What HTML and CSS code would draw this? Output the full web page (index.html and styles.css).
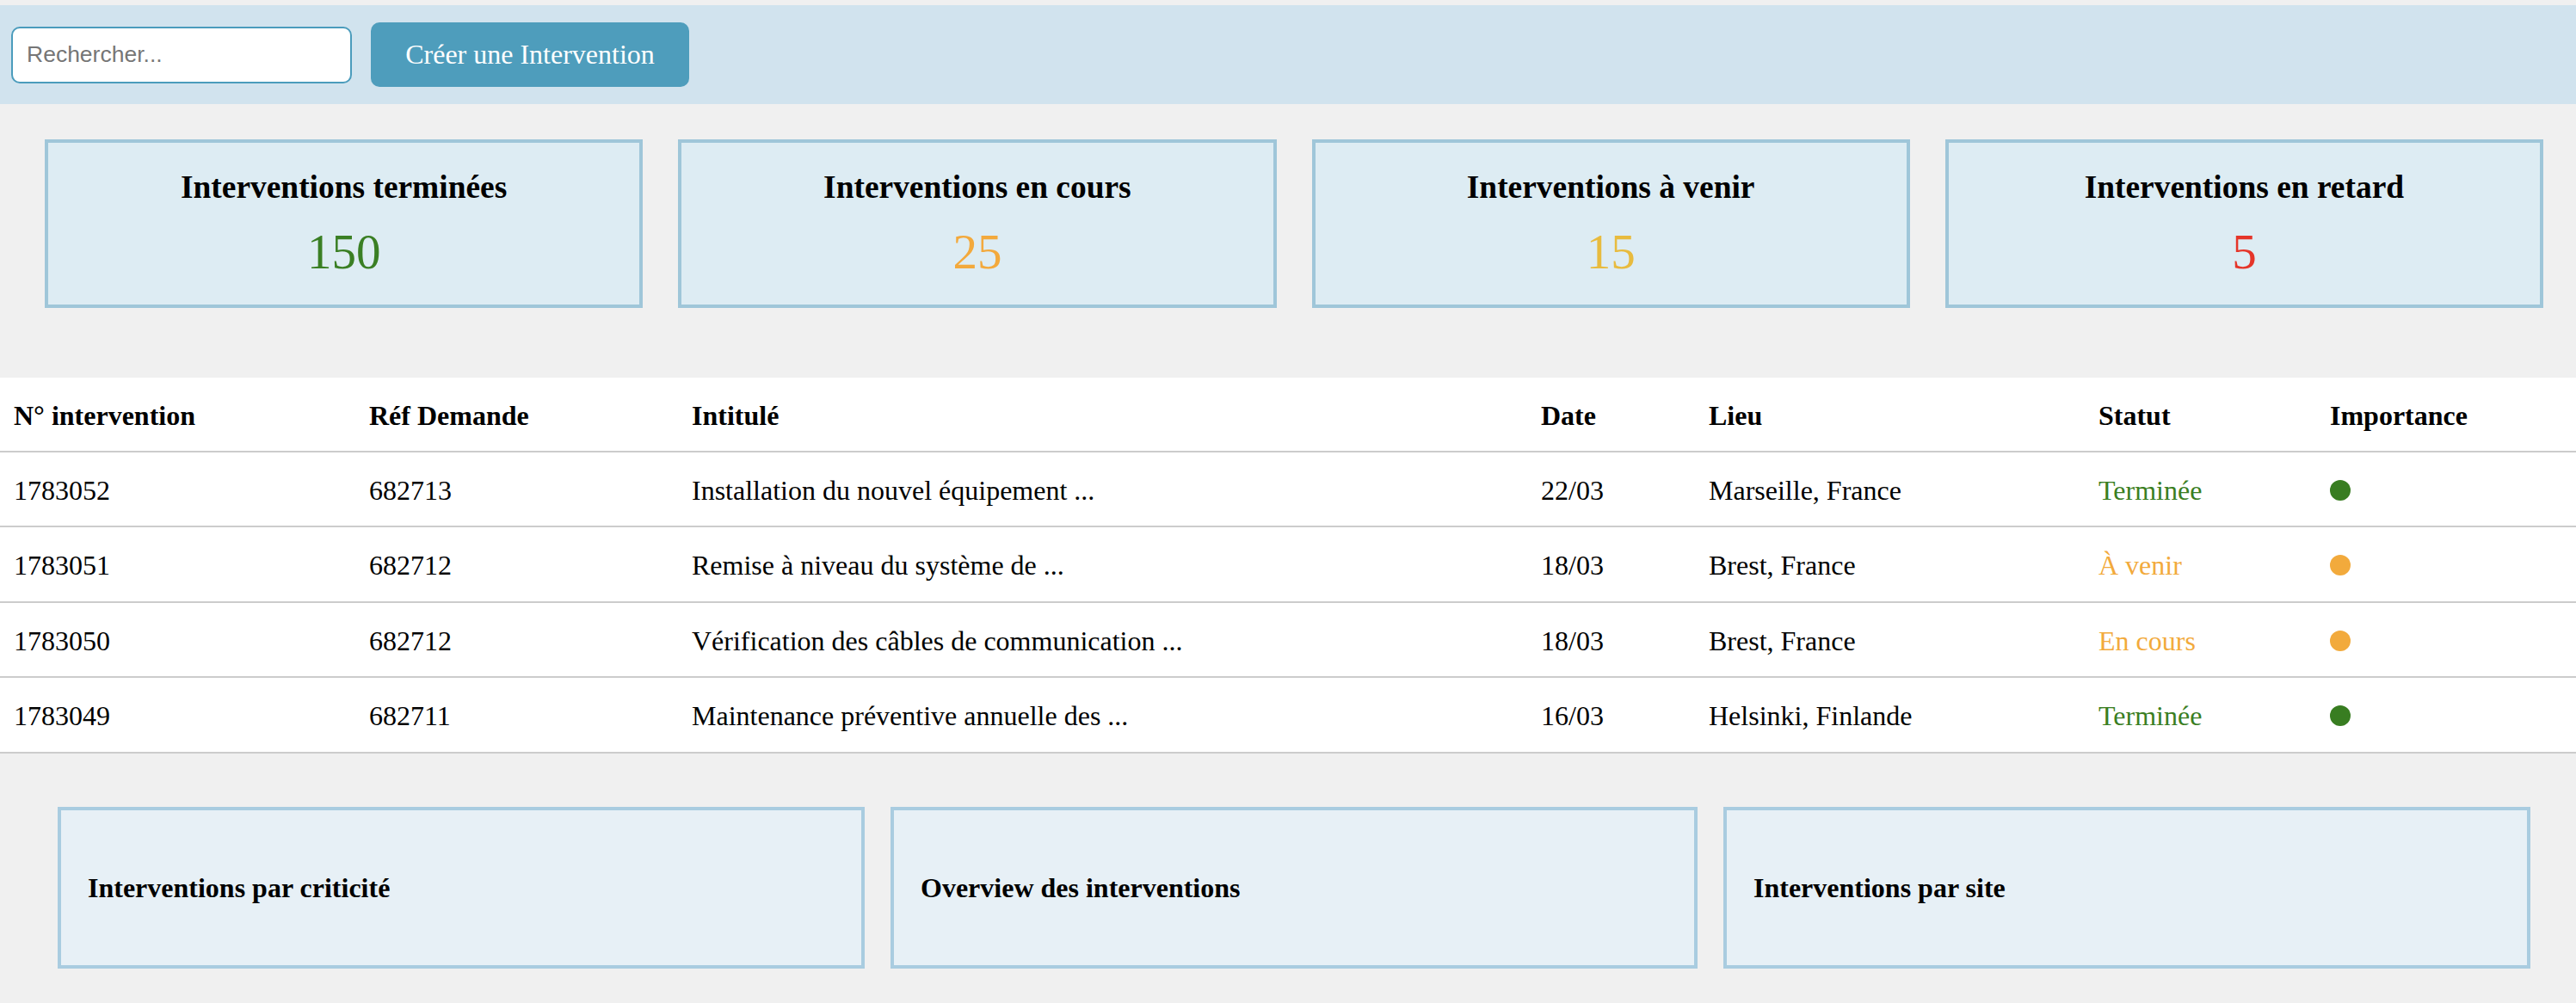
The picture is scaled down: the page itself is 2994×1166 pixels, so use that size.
FILE: index.html
```html
<!DOCTYPE html>
<html lang="fr">
<head>
<meta charset="utf-8">
<title>Interventions</title>
<link rel="stylesheet" href="styles.css">
</head>
<body>
<header class="topbar">
  <input class="search" type="text" placeholder="Rechercher...">
  <button class="create-btn" type="button">Créer une Intervention</button>
</header>

<section class="stats">
  <div class="stat-card">
    <h3 class="stat-title">Interventions terminées</h3>
    <div class="stat-value green">150</div>
  </div>
  <div class="stat-card">
    <h3 class="stat-title">Interventions en cours</h3>
    <div class="stat-value orange">25</div>
  </div>
  <div class="stat-card">
    <h3 class="stat-title">Interventions à venir</h3>
    <div class="stat-value yellow">15</div>
  </div>
  <div class="stat-card">
    <h3 class="stat-title">Interventions en retard</h3>
    <div class="stat-value red">5</div>
  </div>
</section>

<table class="grid">
  <colgroup>
    <col class="c1"><col class="c2"><col class="c3"><col class="c4"><col class="c5"><col class="c6"><col class="c7">
  </colgroup>
  <thead>
    <tr>
      <th>N° intervention</th>
      <th>Réf Demande</th>
      <th>Intitulé</th>
      <th>Date</th>
      <th>Lieu</th>
      <th>Statut</th>
      <th>Importance</th>
    </tr>
  </thead>
  <tbody>
    <tr>
      <td>1783052</td><td>682713</td><td>Installation du nouvel équipement ...</td><td>22/03</td><td>Marseille, France</td>
      <td class="status-done">Terminée</td><td><span class="dot dot-green"></span></td>
    </tr>
    <tr>
      <td>1783051</td><td>682712</td><td>Remise à niveau du système de ...</td><td>18/03</td><td>Brest, France</td>
      <td class="status-pending">À venir</td><td><span class="dot dot-orange"></span></td>
    </tr>
    <tr>
      <td>1783050</td><td>682712</td><td>Vérification des câbles de communication ...</td><td>18/03</td><td>Brest, France</td>
      <td class="status-pending">En cours</td><td><span class="dot dot-orange"></span></td>
    </tr>
    <tr>
      <td>1783049</td><td>682711</td><td>Maintenance préventive annuelle des ...</td><td>16/03</td><td>Helsinki, Finlande</td>
      <td class="status-done">Terminée</td><td><span class="dot dot-green"></span></td>
    </tr>
  </tbody>
</table>

<section class="charts">
  <div class="chart-card"><h4 class="chart-title">Interventions par criticité</h4></div>
  <div class="chart-card"><h4 class="chart-title">Overview des interventions</h4></div>
  <div class="chart-card"><h4 class="chart-title">Interventions par site</h4></div>
</section>
</body>
</html>
```

FILE: styles.css
```css
html, body {
  margin: 0;
  padding: 0;
}
body {
  background: #f0f0f0;
  font-family: "Liberation Serif", "Times New Roman", serif;
  font-size: 32px;
  color: #000;
  padding-top: 6px;
}

.topbar {
  background: #d1e3ee;
  height: 115px;
  box-sizing: border-box;
  display: flex;
  align-items: center;
  padding-left: 13px;
  gap: 22px;
}
.search {
  width: 396px;
  height: 66px;
  box-sizing: border-box;
  border: 2px solid #4b9cbc;
  border-radius: 10px;
  padding: 0 16px;
  font-family: "Liberation Sans", Arial, sans-serif;
  font-size: 26.5px;
  background: #fff;
  outline: none;
}
.search::placeholder {
  color: #767676;
}
.create-btn {
  height: 75px;
  width: 370px;
  box-sizing: border-box;
  border: none;
  border-radius: 10px;
  background: #4e9dbc;
  color: #fff;
  font-family: "Liberation Serif", "Times New Roman", serif;
  font-size: 32px;
  line-height: 37px;
  padding: 0;
  cursor: pointer;
}

.stats {
  display: flex;
  gap: 41px;
  padding: 41px 38px 81px 52px;
}
.stat-card {
  flex: 1;
  height: 196px;
  box-sizing: border-box;
  background: #ddecf3;
  border: 4px solid #9fc6d9;
  padding-top: 30px;
  text-align: center;
}
.stat-title {
  margin: 0;
  font-size: 37.44px;
  line-height: 43px;
  font-weight: bold;
}
.stat-value {
  margin-top: 21px;
  font-size: 57px;
  line-height: 65px;
}
.green { color: #3a7f24; }
.orange { color: #f3a93c; }
.yellow { color: #e8bb3e; }
.red { color: #e53529; }

.grid {
  width: 100%;
  border-collapse: collapse;
  table-layout: fixed;
  background: #fff;
}
.c1 { width: 413px; }
.c2 { width: 375px; }
.c3 { width: 987px; }
.c4 { width: 195px; }
.c5 { width: 453px; }
.c6 { width: 269px; }
.c7 { width: 302px; }
.grid th, .grid td {
  text-align: left;
  padding: 26px 16px 22px;
  line-height: 37.5px;
  border-bottom: 2px solid #cccccc;
  white-space: nowrap;
  overflow: hidden;
}
.grid th {
  font-weight: bold;
  padding: 25.5px 16px 21.5px;
}
.status-done { color: #3a7e22; }
.status-pending { color: #f2aa3c; }
.dot {
  display: inline-block;
  width: 24px;
  height: 24px;
  border-radius: 50%;
  vertical-align: -1px;
}
.dot-green { background: #387d21; }
.dot-orange { background: #f2aa3c; }

.charts {
  display: flex;
  gap: 30px;
  padding: 62px 53px 41px 67px;
}
.chart-card {
  flex: 1;
  height: 188px;
  box-sizing: border-box;
  background: #e7f0f6;
  border: 4px solid #a9cce0;
  padding: 2px 31px 0;
  display: flex;
  align-items: center;
}
.chart-title {
  margin: 0;
  font-size: 32px;
  line-height: 37px;
  font-weight: bold;
}
```
